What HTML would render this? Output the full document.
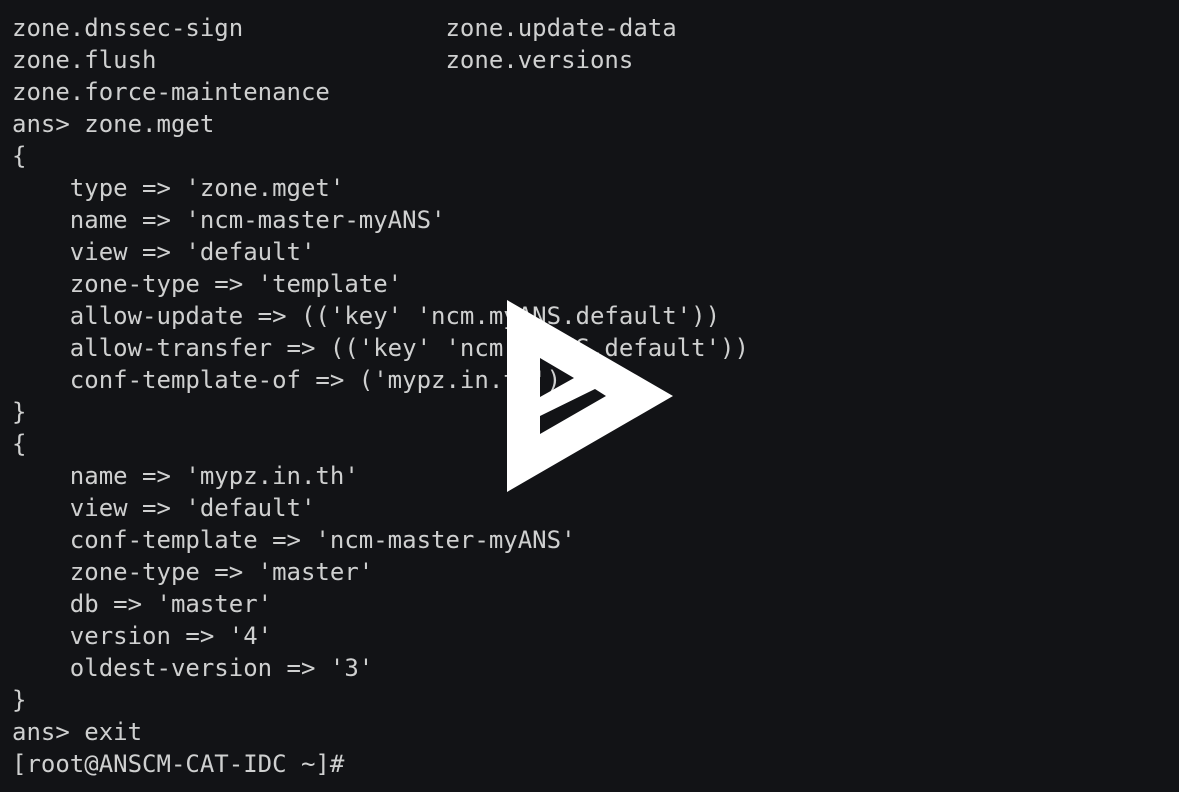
<!DOCTYPE html>
<html><head><meta charset="utf-8"><style>
html,body{margin:0;padding:0;background:#121316;width:1179px;height:792px;overflow:hidden}
pre{margin:0;position:absolute;left:12px;top:12px;font-family:"DejaVu Sans Mono","Liberation Mono",monospace;font-size:24px;line-height:32px;color:#cfd0d0}
svg{position:absolute;left:0;top:0}
</style></head><body>
<pre>zone.dnssec-sign              zone.update-data
zone.flush                    zone.versions
zone.force-maintenance
ans&gt; zone.mget
{
    type =&gt; 'zone.mget'
    name =&gt; 'ncm-master-myANS'
    view =&gt; 'default'
    zone-type =&gt; 'template'
    allow-update =&gt; (('key' 'ncm.myANS.default'))
    allow-transfer =&gt; (('key' 'ncm.myANS.default'))
    conf-template-of =&gt; ('mypz.in.th')
}
{
    name =&gt; 'mypz.in.th'
    view =&gt; 'default'
    conf-template =&gt; 'ncm-master-myANS'
    zone-type =&gt; 'master'
    db =&gt; 'master'
    version =&gt; '4'
    oldest-version =&gt; '3'
}
ans&gt; exit
[root@ANSCM-CAT-IDC ~]#</pre>
<svg width="1179" height="792"><path fill="#fff" fill-rule="evenodd" d="M507 300 L673 396 L507 492 Z M540 358 L540 397 L574 378 Z M540 416 L595 389 L606 396 L540 434 Z"/></svg>
</body></html>
